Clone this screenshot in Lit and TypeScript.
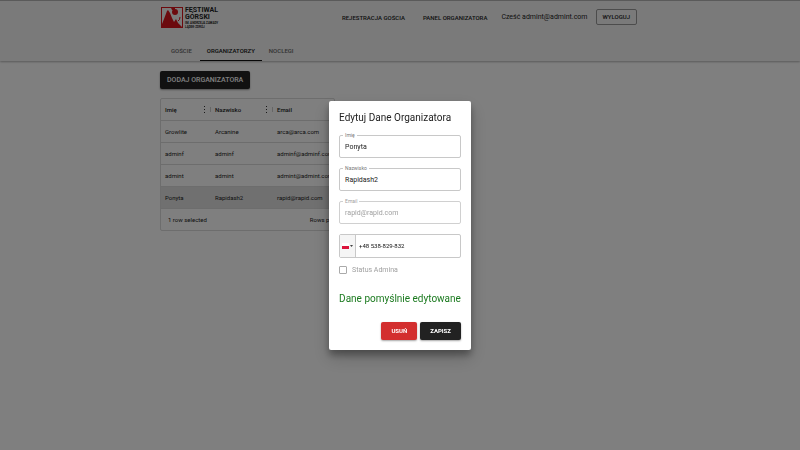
import { LitElement, html, css, svg } from "lit";
import { customElement, property } from "lit/decorators.js";
import { classMap } from "lit/directives/class-map.js";

interface Organizer {
  name: string;
  surname: string;
  email: string;
}

const organizers: Organizer[] = [
  { name: "Growlite", surname: "Arcanine", email: "arca@arca.com" },
  { name: "adminf", surname: "adminf", email: "adminf@adminf.com" },
  { name: "admint", surname: "admint", email: "admint@admint.com" },
  { name: "Ponyta", surname: "Rapidash2", email: "rapid@rapid.com" },
];

const mountain = svg`
  <rect x="0.5" y="0.5" width="21" height="20" fill="#f5f5f5" stroke="#d8141c"/>
  <path d="M1 20V17L3 12L6 4L7 3L9 6L11 11L13 15L15 12L17 16L19 18L21 20V21H1Z" fill="#d8141c"/>
  <circle cx="14" cy="5" r="3" fill="#d8141c"/>
  <path d="M10 1H14V3H11Z" fill="#d8141c"/>
  <path d="M17 14Q19 13 19 10" fill="none" stroke="#d8141c" stroke-width="1"/>
`;

@customElement("site-header")
export class SiteHeader extends LitElement {
  static styles = css`
    :host {
      display: block;
      background: #f5f5f5;
      border-top: 1px solid #b4b4b4;
      box-shadow: 0 1px 2px rgba(0, 0, 0, 0.3);
    }
    .inner {
      max-width: 480px;
      margin: 0 auto;
    }
    .top {
      display: flex;
      align-items: center;
      justify-content: space-between;
      height: 32px;
      padding-right: 3px;
    }
    a {
      color: inherit;
      text-decoration: none;
    }
    .logo {
      display: flex;
      align-items: center;
      gap: 2px;
      padding: 1px 0 0 1px;
    }
    .words {
      display: flex;
      flex-direction: column;
      font-weight: 700;
      font-size: 7px;
      line-height: 7px;
    }
    .small {
      font-size: 3px;
      line-height: 4px;
    }
    nav {
      display: flex;
      align-items: center;
      font-weight: 500;
      font-size: 6px;
    }
    .links {
      gap: 18px;
    }
    .user {
      font-size: 7px;
      font-weight: 400;
      margin-left: -4px;
    }
    .logout {
      font: 500 6px/14px Roboto, sans-serif;
      color: #222;
      background: none;
      border: 1px solid #999;
      border-radius: 2px;
      padding: 0 6px;
      margin-left: -10px;
    }
    .tabs {
      height: 28px;
      padding-left: 3px;
      color: #666;
      align-items: stretch;
    }
    .tab {
      display: flex;
      align-items: center;
      padding: 8px 8px 0;
      border-bottom: 1px solid transparent;
    }
    .tab + .tab {
      padding: 8px 7px 0;
    }
    .current {
      color: #111;
      border-color: #111;
    }
  `;

  render() {
    return html`
      <div class="inner">
        <div class="top">
          <a class="logo" href="#">
            <svg width="22" height="21" viewBox="0 0 22 21" aria-hidden="true">${mountain}</svg>
            <span class="words">
              <span>FESTIWAL</span><span>GÓRSKI</span>
              <span class="small">IM. ANDRZEJA ZAWADY</span>
              <span class="small">LĄDEK-ZDRÓJ</span>
            </span>
          </a>
          <nav class="links">
            <a href="#">REJESTRACJA GOŚCIA</a>
            <a href="#">PANEL ORGANIZATORA</a>
            <span class="user">Cześć admint@admint.com</span>
            <button class="logout">WYLOGUJ</button>
          </nav>
        </div>
        <nav class="tabs">
          <a class="tab" href="#">GOŚCIE</a>
          <a class="tab current" href="#">ORGANIZATORZY</a>
          <a class="tab" href="#">NOCLEGI</a>
        </nav>
      </div>
    `;
  }
}

@customElement("organizer-table")
export class OrganizerTable extends LitElement {
  static styles = css`
    :host {
      display: block;
      border: 1px solid #dadada;
      border-radius: 2px;
      font-size: 6px;
    }
    table {
      width: 100%;
      border-collapse: collapse;
      table-layout: fixed;
    }
    .first {
      width: 50px;
    }
    .second {
      width: 62px;
    }
    th,
    td {
      box-sizing: border-box;
      height: 22px;
      padding: 0 4px;
      text-align: left;
      white-space: nowrap;
      border-bottom: 1px solid #dadada;
    }
    th {
      height: 21px;
      font-weight: 500;
      padding-right: 0;
    }
    .head {
      display: flex;
      align-items: center;
      justify-content: space-between;
    }
    .selected {
      background: #e0e0e0;
    }
    .foot {
      display: flex;
      gap: 103px;
      padding-left: 7px;
      line-height: 21px;
      white-space: nowrap;
    }
  `;

  render() {
    const mark = html`<svg width="9" height="7" viewBox="0 0 9 7" aria-hidden="true">
      <path d="M2 0h1v1h-1zM2 3h1v1h-1zM2 6h1v1h-1z" fill="#333" />
      <path d="M8 1h1v5h-1z" fill="#ccc" />
    </svg>`;
    return html`
      <table>
        <thead>
          <tr>
            <th class="first"><div class="head">Imię ${mark}</div></th>
            <th class="second"><div class="head">Nazwisko ${mark}</div></th>
            <th>Email</th>
          </tr>
        </thead>
        <tbody>
          ${organizers.map(
            (o) => html`<tr class=${classMap({ selected: o.name === "Ponyta" })}>
              <td>${o.name}</td>
              <td>${o.surname}</td>
              <td>${o.email}</td>
            </tr>`
          )}
        </tbody>
      </table>
      <div class="foot"><span>1 row selected</span><span>Rows per page:</span></div>
    `;
  }
}

@customElement("text-field")
export class TextField extends LitElement {
  @property() label = "";
  @property() value = "";
  @property({ type: Boolean }) disabled = false;

  static styles = css`
    :host {
      display: block;
      position: relative;
    }
    label {
      position: absolute;
      left: 4px;
      top: -3px;
      padding: 0 2px;
      background: #fff;
      color: #777;
      font-size: 5px;
      line-height: 6px;
    }
    input {
      display: block;
      box-sizing: border-box;
      width: 100%;
      height: 23px;
      padding: 1px 5px 0;
      border: 1px solid #c8c8c8;
      border-radius: 2px;
      background: #fff;
      color: #222;
      font: 400 7px Roboto, sans-serif;
    }
    input:disabled {
      color: #a0a0a0;
      border-color: #d0d0d0;
    }
    input:disabled + label {
      color: #a0a0a0;
    }
  `;

  render() {
    return html`
      <input id="field" .value=${this.value} ?disabled=${this.disabled} />
      <label for="field">${this.label}</label>
    `;
  }
}

@customElement("edit-dialog")
export class EditDialog extends LitElement {
  static styles = css`
    :host {
      position: fixed;
      inset: 0;
      display: flex;
      align-items: center;
      justify-content: center;
      background: rgba(0, 0, 0, 0.5);
    }
    .paper {
      padding: 10px;
      background: #fff;
      border-radius: 2px;
      box-shadow: 0 5px 7px rgba(0, 0, 0, 0.3), 0 8px 18px rgba(0, 0, 0, 0.2);
    }
    h2 {
      margin: 0 0 10px;
      font-size: 10px;
      line-height: 14px;
      font-weight: 400;
    }
    .fields {
      display: grid;
      gap: 10px;
    }
    .phone {
      display: flex;
      height: 22px;
      margin-top: 10px;
      border: 1px solid #c8c8c8;
      border-radius: 2px;
    }
    .country {
      display: flex;
      align-items: center;
      justify-content: center;
      gap: 1px;
      box-sizing: border-box;
      width: 16px;
      padding: 0;
      border: 0;
      border-right: 1px solid #c8c8c8;
      background: #f5f5f5;
    }
    .number {
      flex: 1;
      min-width: 0;
      padding: 0 3px;
      border: 0;
      background: none;
      color: #111;
      font: 400 6px Roboto, sans-serif;
    }
    .status {
      display: flex;
      align-items: center;
      gap: 5px;
      margin-top: 7px;
      color: #a0a0a0;
      font-size: 7px;
      line-height: 10px;
    }
    .status input {
      appearance: none;
      width: 8px;
      height: 8px;
      margin: 0;
      border: 1px solid #aaa;
      border-radius: 1px;
    }
    .message {
      margin: 17px 0 16px;
      color: #1b7a1f;
      font-size: 10px;
      line-height: 14px;
    }
    .actions {
      display: flex;
      justify-content: flex-end;
      gap: 3px;
    }
    .actions button {
      padding: 0 10px;
      border: 0;
      border-radius: 2px;
      background: #222;
      color: #fff;
      font: 700 6px/18px Roboto, sans-serif;
      box-shadow: 0 1px 2px rgba(0, 0, 0, 0.35);
    }
    .actions .delete {
      background: #d32f2f;
    }
  `;

  render() {
    return html`
      <div class="paper" role="dialog" aria-modal="true" aria-labelledby="title">
        <h2 id="title">Edytuj Dane Organizatora</h2>
        <div class="fields">
          <text-field label="Imię" value="Ponyta"></text-field>
          <text-field label="Nazwisko" value="Rapidash2"></text-field>
          <text-field label="Email" value="rapid@rapid.com" disabled></text-field>
        </div>
        <div class="phone">
          <button class="country" aria-label="Polska">
            <svg width="7" height="6" viewBox="0 0 7 6" aria-hidden="true">
              <path d="M0 0h7v3h-7z" fill="#fff" />
              <path d="M0 3h7v3h-7z" fill="#dc143c" />
            </svg>
            <svg width="3" height="2" viewBox="0 0 3 2" aria-hidden="true">
              <path d="M0 0h3L1.5 2z" fill="#444" />
            </svg>
          </button>
          <input class="number" type="tel" aria-label="Telefon" value="+48 538-829-832" />
        </div>
        <label class="status"><input type="checkbox" disabled />Status Admina</label>
        <p class="message">Dane pomyślnie edytowane</p>
        <div class="actions">
          <button class="delete">USUŃ</button>
          <button>ZAPISZ</button>
        </div>
      </div>
    `;
  }
}

@customElement("app-root")
export class AppRoot extends LitElement {
  static styles = css`
    :host {
      display: block;
      min-height: 100vh;
      background: #fff;
      color: #222;
      font-family: Roboto, sans-serif;
    }
    main {
      max-width: 480px;
      margin: 0 auto;
      padding-top: 10px;
    }
    .add {
      display: block;
      padding: 0 7px;
      margin-bottom: 9px;
      border: 0;
      border-radius: 2px;
      background: #222;
      color: #fff;
      font: 500 7px/18px Roboto, sans-serif;
      box-shadow: 0 1px 2px rgba(0, 0, 0, 0.4);
    }
    organizer-table {
      width: 36%;
    }
  `;

  render() {
    return html`
      <site-header></site-header>
      <main>
        <button class="add">DODAJ ORGANIZATORA</button>
        <organizer-table></organizer-table>
      </main>
      <edit-dialog></edit-dialog>
    `;
  }
}
